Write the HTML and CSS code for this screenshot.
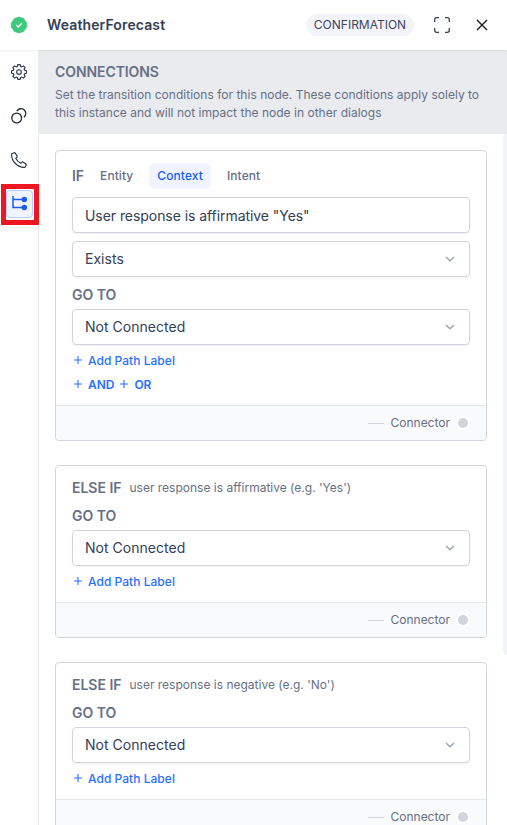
FILE: index.html
```html
<!DOCTYPE html>
<html lang="en">
<head>
<meta charset="utf-8">
<title>WeatherForecast</title>
<link rel="stylesheet" href="styles.css">
</head>
<body>
<svg class="defs" aria-hidden="true">
  <symbol id="chevron" viewBox="0 0 10 6"><path d="M1 1l4 3.800L9 1" fill="none" stroke="currentColor" stroke-width="1.400"/></symbol>
  <symbol id="plus" viewBox="0 0 10 10"><path d="M5 1v8M1 5h8" fill="none" stroke="currentColor" stroke-width="1.100"/></symbol>
</svg>
<div class="panel">
  <header class="header">
    <svg class="status" viewBox="0 0 16 16"><path d="M8 0l2.300.8 2.400.6 1.200 2.100L15.500 5.500 15.700 8l-.2 2.500-1.600 2-1.200 2.100-2.400.6L8 16l-2.300-.8-2.400-.6-1.200-2.100-1.600-2L.3 8l.2-2.500 1.600-2 1.200-2.100 2.400-.6z" fill="#3cc97c" stroke="#3cc97c" stroke-width=".7" stroke-linejoin="round"/><path d="M5.300 8.100l1.900 1.800 3.600-3.700" fill="none" stroke="#fff" stroke-width="1.400"/></svg>
    <h1 class="title">WeatherForecast</h1>
    <span class="badge">CONFIRMATION</span>
    <svg class="expand" viewBox="0 0 16 16"><path d="M.7 5V2.700q0-2 2-2H5M11 .7h2.300q2 0 2 2V5M15.300 11v2.300q0 2-2 2H11M5 15.300H2.700q-2 0-2-2V11" fill="none" stroke="#344054" stroke-width="1.300"/></svg>
    <svg class="close" viewBox="0 0 12 12"><path d="M1 1l10 10M11 1L1 11" fill="none" stroke="#181b22" stroke-width="1.400"/></svg>
  </header>
  <div class="body">
    <nav class="rail">
      <span class="rail-item"><svg viewBox="0 0 16 16"><path d="M6.800.6h2.400l.5 1.900 1 .4 1.700-1 1.700 1.700-1 1.700.4 1 1.900.5v2.400l-1.900.5-.4 1 1 1.700-1.700 1.700-1.700-1-1 .4-.5 1.900H6.800l-.5-1.900-1-.4-1.700 1-1.700-1.700 1-1.700-.4-1-1.900-.5V6.800l1.900-.5.4-1-1-1.700 1.700-1.700 1.700 1 1-.4z" fill="none" stroke="#263147" stroke-width="1.100" stroke-linejoin="round"/><circle cx="8" cy="8" r="2.300" fill="none" stroke="#263147" stroke-width="1.100"/></svg></span>
      <span class="rail-item"><svg viewBox="0 0 16 16"><circle cx="5.700" cy="10" r="4.900" fill="none" stroke="#222936" stroke-width="1.300"/><path d="M5.800 3.100A4.800 4.800 0 1 1 13 9.200" fill="none" stroke="#222936" stroke-width="1.300"/></svg></span>
      <span class="rail-item"><svg viewBox="0 0 16 16"><path d="M1.200 1.500L3.200.7q.6-.2 1 .4l1.900 3q.3.600-.2 1.100L4.700 6.300q1.600 3.200 4.900 5l1.200-1.200q.5-.4 1.100-.1l2.900 1.800q.6.400.4 1l-.8 2q-.3.600-1 .6Q8.600 15.600 4.400 11.500.4 7.500.6 2.400q0-.6.6-.9z" fill="none" stroke="#263147" stroke-width="1.100" stroke-linejoin="round"/></svg></span>
      <span class="rail-item rail-marked"><span class="rail-active"><svg viewBox="0 0 16 16"><path d="M1 0v11.500h10M1 3.500h10" fill="none" stroke="#1c59ed" stroke-width="1.500"/><circle cx="12.300" cy="3.500" r="2.700" fill="#1c59ed"/><circle cx="12.300" cy="11.500" r="2.700" fill="#1c59ed"/></svg></span></span>
    </nav>
    <main class="main">
      <section class="intro">
        <h2 class="intro-title">CONNECTIONS</h2>
        <p class="intro-text">Set the transition conditions for this node. These conditions apply solely to<br>this instance and will not impact the node in other dialogs</p>
      </section>
      <div class="cards">
        <section class="card">
          <div class="card-body">
            <div class="tabs"><span class="label">IF</span><span class="tab">Entity</span><span class="tab tab-on">Context</span><span class="tab">Intent</span></div>
            <div class="field">User response is affirmative "Yes"</div>
            <div class="field select"><span>Exists</span><svg class="chevron"><use href="#chevron"/></svg></div>
            <div class="label goto">GO TO</div>
            <div class="field select"><span>Not Connected</span><svg class="chevron"><use href="#chevron"/></svg></div>
            <div class="links">
              <div class="link"><svg class="plus"><use href="#plus"/></svg>Add Path Label</div>
              <div class="link link-strong"><svg class="plus"><use href="#plus"/></svg>AND<svg class="plus plus-next"><use href="#plus"/></svg>OR</div>
            </div>
          </div>
          <footer class="card-foot"><i class="wire"></i><span class="foot-text">Connector</span><i class="dot"></i></footer>
        </section>
        <section class="card">
          <div class="card-body">
            <div class="condition"><span class="label">ELSE IF</span><span class="expr">user response is affirmative (e.g. 'Yes')</span></div>
            <div class="label goto">GO TO</div>
            <div class="field select"><span>Not Connected</span><svg class="chevron"><use href="#chevron"/></svg></div>
            <div class="links"><div class="link"><svg class="plus"><use href="#plus"/></svg>Add Path Label</div></div>
          </div>
          <footer class="card-foot"><i class="wire"></i><span class="foot-text">Connector</span><i class="dot"></i></footer>
        </section>
        <section class="card">
          <div class="card-body">
            <div class="condition"><span class="label">ELSE IF</span><span class="expr">user response is negative (e.g. 'No')</span></div>
            <div class="label goto">GO TO</div>
            <div class="field select"><span>Not Connected</span><svg class="chevron"><use href="#chevron"/></svg></div>
            <div class="links"><div class="link"><svg class="plus"><use href="#plus"/></svg>Add Path Label</div></div>
          </div>
          <footer class="card-foot"><i class="wire"></i><span class="foot-text">Connector</span><i class="dot"></i></footer>
        </section>
        <div class="scrollbar"></div>
      </div>
    </main>
  </div>
</div>
</body>
</html>
```
FILE: styles.css
```css
* { box-sizing: border-box; }
body { margin: 0; font-family: Inter, "Liberation Sans", sans-serif; background: #fff; color: #344054; overflow: hidden; }
svg { display: block; flex: none; }
h1, h2, p { margin: 0; }
.defs { display: none; }
.panel { height: 825px; display: flex; flex-direction: column; overflow: hidden; }
.header { height: 50px; flex: none; display: flex; align-items: center; padding: 0 19px 0 11px; box-shadow: 0 1px 2px rgba(16, 24, 40, .06); z-index: 1; }
.status { width: 16px; height: 16px; overflow: visible; }
.title { margin-left: 20px; font-size: 14px; line-height: 20px; font-weight: 600; letter-spacing: .12px; color: #344054; }
.badge { margin-left: auto; height: 22px; width: 108px; text-align: center; border-radius: 11px; background: #f2f4f9; font-size: 12px; line-height: 22px; color: #3c4560; }
.expand { width: 16px; height: 16px; margin-left: 20px; }
.close { width: 12px; height: 12px; margin: 0 0 0 26px; }
.body { flex: 1; min-height: 0; display: flex; }
.rail { width: 39px; flex: none; border-right: 1px solid #eaecf0; }
.rail-item { height: 44px; display: flex; align-items: center; justify-content: center; }
.rail-item svg { width: 16px; height: 16px; }
.rail-marked { width: 38px; height: 41px; margin: 2px 0 0 1px; padding: 0 1px 1px 0; justify-content: flex-start; border: 5px solid #ed1622; position: relative; }
.rail-active { width: 27px; height: 28px; display: flex; align-items: center; justify-content: center; background: #eff4ff; border: 1px solid #b2ccff; border-radius: 4px; }
.main { flex: 1; min-width: 0; display: flex; flex-direction: column; }
.intro { height: 84px; flex: none; padding: 12px 16px; background: #eaebef; color: #667085; }
.intro-title { font-size: 14px; line-height: 20px; font-weight: 600; letter-spacing: -.08px; }
.intro-text { margin-top: 4px; font-size: 12px; line-height: 18px; letter-spacing: .018px; white-space: nowrap; }
.cards { flex: 1; min-height: 0; overflow: hidden; padding: 16px 20px 0 16px; display: flex; flex-direction: column; gap: 24px; position: relative; }
.card { flex: none; border: 1px solid #d0d5dd; border-radius: 4px; overflow: hidden; }
.card-body { padding: 12px 16px 8px; }
.tabs { height: 26px; margin-bottom: 8px; display: flex; align-items: center; font-size: 12px; font-weight: 500; color: #667085; }
.label { font-size: 14px; line-height: 20px; font-weight: 600; letter-spacing: -.02px; color: #667085; }
.tab { height: 26px; line-height: 26px; padding: 0 8px; margin-left: 8px; border-radius: 6px; letter-spacing: .08px; }
.tab-on { background: #eff4ff; color: #155eef; }
.field { height: 36px; padding: 0 12px; border: 1px solid #d0d5dd; border-radius: 4px; font-size: 14px; line-height: 36px; letter-spacing: -.06px; color: #344054; box-shadow: 0 1px 2px rgba(16, 24, 40, .05); }
.field + .field { margin-top: 8px; }
.select { display: flex; align-items: center; justify-content: space-between; padding-right: 14px; letter-spacing: .02px; }
.chevron { width: 10px; height: 6px; color: #98a2b3; }
.goto { margin: 8px 0 4px; }
.links { padding: 3px 0 1px; }
.link { height: 24px; display: flex; align-items: center; font-size: 12px; font-weight: 500; letter-spacing: .03px; color: #2970ff; }
.link-strong { font-weight: 600; letter-spacing: -.03px; }
.plus { width: 10px; height: 10px; margin: 0 5px 0 1px; }
.plus-next { margin-left: 5px; }
.condition { display: flex; align-items: center; gap: 8px; }
.expr { font-size: 12px; line-height: 20px; color: #667085; }
.card-foot { height: 35px; border-top: 1px solid #e4e7ec; background: #f9fafb; display: flex; align-items: center; justify-content: flex-end; padding-right: 16px; font-size: 12px; color: #667085; }
.foot-text { padding-bottom: 2px; }
.wire { width: 16px; height: 1px; margin-right: 6px; background: #d0d5dd; }
.dot { width: 14px; height: 14px; margin-left: 6px; border: 2px solid #fff; border-radius: 50%; background: #d0d5dd; }
.scrollbar { position: absolute; top: 0; right: 0; width: 4px; height: 521px; background: #f2f4f9; border-radius: 4px 0 0 4px; }
```
